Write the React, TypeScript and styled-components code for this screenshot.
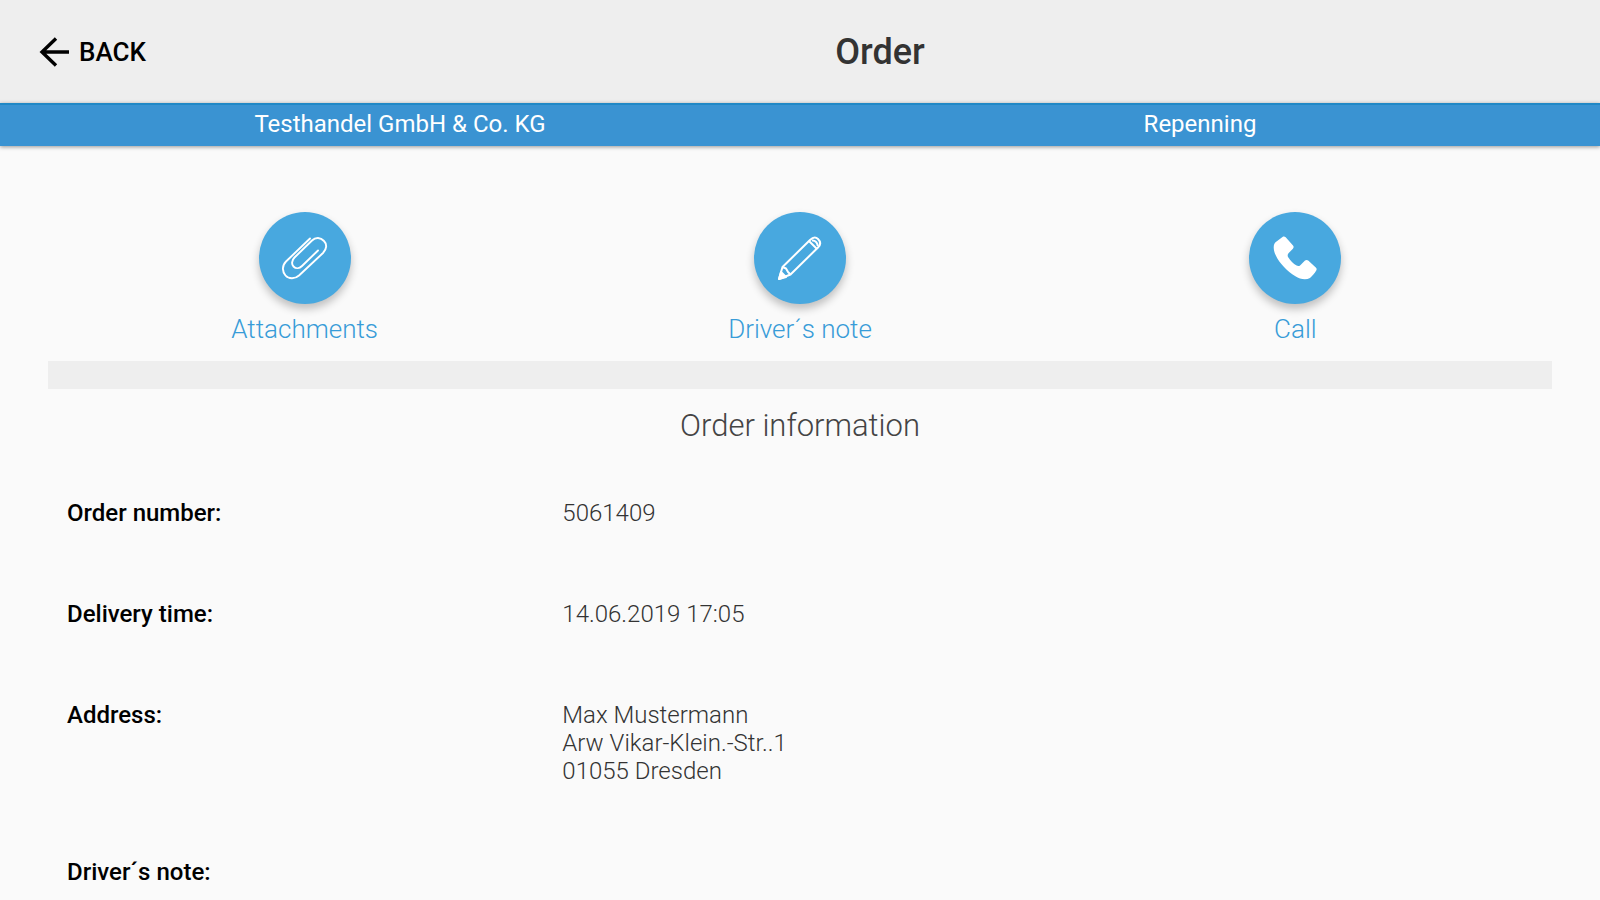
import React from "react";
import styled, { createGlobalStyle } from "styled-components";

const GlobalStyle = createGlobalStyle`
  *, *::before, *::after { box-sizing: border-box; }
  html { scrollbar-width: none; }
  body {
    margin: 0;
    background: #fafafa;
    color: #000;
    font-family: Roboto, "Liberation Sans", sans-serif;
  }
`;

const Header = styled.header`
  display: flex;
  align-items: center;
  height: 103px;
  padding-top: 1px;
  background: #eee;
`;

const BackButton = styled.button`
  display: flex;
  align-items: center;
  gap: 10px;
  width: 160px;
  padding: 0 0 0 39px;
  border: 0;
  background: none;
  color: #000;
  font: 500 26px/32px Roboto, "Liberation Sans", sans-serif;
  cursor: pointer;
`;

const Title = styled.h1`
  flex: 1;
  margin: 0;
  text-align: center;
  color: #333;
  font-size: 36px;
  line-height: 44px;
  font-weight: 500;
`;

const PartyBar = styled.div`
  display: flex;
  height: 43px;
  background: #3a93d2;
  border-top: 2px solid #2088c6;
  box-shadow: 0 1px 4px rgba(0, 0, 0, 0.4);
`;

const Party = styled.div`
  flex: 1;
  padding-top: 3px;
  text-align: center;
  color: #fff;
  font-size: 24px;
  line-height: 32px;
`;

const Actions = styled.nav`
  display: flex;
  padding: 66px 57px 0;
`;

const Action = styled.button`
  flex: 1;
  display: flex;
  flex-direction: column;
  align-items: center;
  gap: 9px;
  padding: 0;
  border: 0;
  background: none;
  color: #389cd8;
  font: 300 26px/32px Roboto, "Liberation Sans", sans-serif;
  cursor: pointer;
`;

const Disc = styled.span`
  display: flex;
  align-items: center;
  justify-content: center;
  width: 92px;
  height: 92px;
  border-radius: 50%;
  background: #48a8df;
  box-shadow: 0 5px 8px rgba(0, 0, 0, 0.24);
`;

const Divider = styled.hr`
  height: 28px;
  margin: 16px 48px 0;
  border: 0;
  background: #eee;
`;

const SectionTitle = styled.h2`
  margin: 17px 0 0;
  text-align: center;
  color: #444;
  font-size: 31px;
  line-height: 40px;
  font-weight: 300;
`;

const Details = styled.dl`
  margin: 17px 57px 0;
`;

const DetailRow = styled.div`
  display: grid;
  grid-template-columns: 1fr 2fr;
  padding: 36px 0 37px;
`;

const Label = styled.dt`
  padding: 0 10px;
  font-size: 24px;
  line-height: 28px;
  font-weight: 500;
`;

const Value = styled.dd`
  margin: 0;
  padding: 0 10px;
  color: #333;
  font-size: 24px;
  line-height: 28px;
  font-weight: 300;
  white-space: pre-line;
`;

const BackArrow = () => (
  <svg width="30" height="30" viewBox="0 0 30 30" fill="none" stroke="#000" strokeWidth="3.4" aria-hidden="true">
    <path d="M30 15H3M17 1.500L3 15L17 28.500" />
  </svg>
);

const ClipIcon = () => (
  <svg width="48" height="48" viewBox="0 0 48 48" fill="none" stroke="#fff" strokeWidth="1.900" strokeLinecap="round" strokeLinejoin="round" aria-hidden="true">
    <path d="M29 4.500L5 27.500C0.500 32 1.500 38 4.500 41.500C8 45.500 14 45 18 41.500L42 19C46 15 46 10 43 7C39.500 3 34.500 3 31 6.500L13.500 23.500C10.500 26.500 10.500 30.500 12.500 32.500C15 35 18.500 34.500 21 32L37 16.500" />
  </svg>
);

const PencilIcon = () => (
  <svg width="48" height="48" viewBox="0 0 48 48" fill="none" stroke="#fff" strokeWidth="2" strokeLinejoin="round" aria-hidden="true">
    <path d="M3 45L6.500 33L34 6C37 3 39.500 2.500 42 5C45 8 45 10.500 42 13.500L14.500 40.500Z" />
    <path d="M6.500 33L10 34.500L12 38L14.500 40.500M33 7L41 15M36 6.500C39 6 42 9 41.500 12" />
    <path d="M3 45L5 38L10 43Z" fill="#fff" />
  </svg>
);

const PhoneIcon = () => (
  <svg width="48" height="48" viewBox="0 0 48 48" fill="#fff" aria-hidden="true">
    <path d="M11.500 3C12.500 2.300 13.800 2.400 14.700 3.300L22 11.500C22.900 12.500 22.800 13.800 21.900 14.700L17.500 19.300C16.500 20.500 16.400 22 17.200 23.200C19.500 26.700 22.200 29.400 25.600 31.600C26.900 32.400 28.300 32.200 29.300 31.200L34 26.600C35 25.700 36.300 25.700 37.200 26.600L44.800 33.500C45.800 34.400 45.900 35.800 45.100 36.800C43.500 39.300 41.500 42 39 44C34.800 46.200 29 45.200 24.400 42.300C16 37 8.500 29.500 4.600 21C2.400 16.200 1.800 11 4.500 8.300Z" />
  </svg>
);

const actions = [
  { label: "Attachments", Icon: ClipIcon },
  { label: "Driver´s note", Icon: PencilIcon },
  { label: "Call", Icon: PhoneIcon },
];

const details = [
  { label: "Order number:", value: "5061409" },
  { label: "Delivery time:", value: "14.06.2019 17:05" },
  { label: "Address:", value: "Max Mustermann\nArw Vikar-Klein.-Str..1\n01055 Dresden" },
  { label: "Driver´s note:", value: "" },
];

export default function App() {
  return (
    <>
      <GlobalStyle />
      <Header>
        <BackButton type="button">
          <BackArrow />
          BACK
        </BackButton>
        <Title>Order</Title>
      </Header>
      <PartyBar>
        <Party>Testhandel GmbH &amp; Co. KG</Party>
        <Party>Repenning</Party>
      </PartyBar>
      <main>
        <Actions>
          {actions.map(({ label, Icon }) => (
            <Action type="button" key={label}>
              <Disc>
                <Icon />
              </Disc>
              {label}
            </Action>
          ))}
        </Actions>
        <Divider />
        <SectionTitle>Order information</SectionTitle>
        <Details>
          {details.map(({ label, value }) => (
            <DetailRow key={label}>
              <Label>{label}</Label>
              <Value>{value}</Value>
            </DetailRow>
          ))}
        </Details>
      </main>
    </>
  );
}
